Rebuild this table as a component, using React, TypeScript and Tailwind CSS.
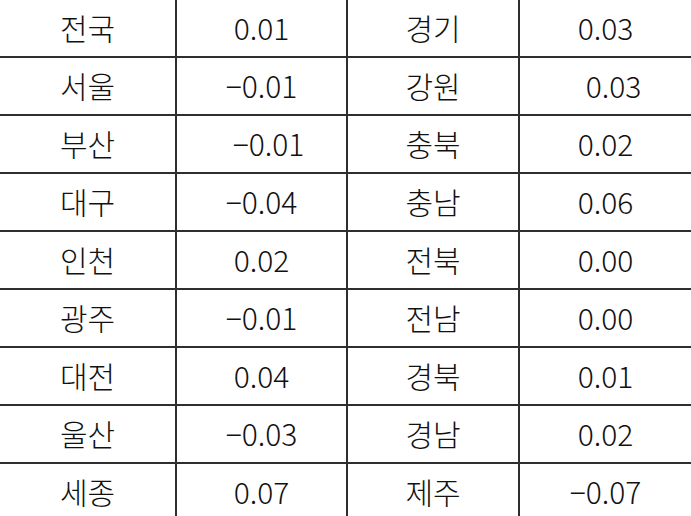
import React from "react";

const rows: [string, string, string, string, string?, string?][] = [
  ["전국", "0.01", "경기", "0.03"],
  ["서울", "-0.01", "강원", "0.03", "", "pl-[16px]"],
  ["부산", "-0.01", "충북", "0.02", "pl-[14px]", ""],
  ["대구", "-0.04", "충남", "0.06"],
  ["인천", "0.02", "전북", "0.00"],
  ["광주", "-0.01", "전남", "0.00"],
  ["대전", "0.04", "경북", "0.01"],
  ["울산", "-0.03", "경남", "0.02"],
  ["세종", "0.07", "제주", "-0.07"],
];

function fmt(v: string) {
  return v.startsWith("-") ? "\u2212" + v.slice(1) : v;
}

const cell = "flex items-center justify-center pb-[2px] text-[30px] font-light leading-none";

export default function App() {
  return (
    <div
      className="w-[691px] h-[516px] overflow-hidden bg-white text-[#111111]"
      style={{ fontFamily: '"Noto Sans CJK KR", sans-serif' }}
    >
      {rows.map((r, i) => (
        <div
          key={i}
          className={
            "grid grid-cols-[175px_171px_172px_173px] " +
            (i === 0 ? "h-[56px]" : "h-[58px] border-t-2 border-[#2e2e2e]")
          }
        >
          <div className={cell}>{r[0]}</div>
          <div className={cell + " border-l-2 border-[#2e2e2e]"}>
            <span className={r[4] ?? ""}>{fmt(r[1])}</span>
          </div>
          <div className={cell + " border-l-2 border-[#2e2e2e]"}>{r[2]}</div>
          <div className={cell + " border-l-2 border-[#2e2e2e]"}>
            <span className={r[5] ?? ""}>{fmt(r[3])}</span>
          </div>
        </div>
      ))}
    </div>
  );
}
